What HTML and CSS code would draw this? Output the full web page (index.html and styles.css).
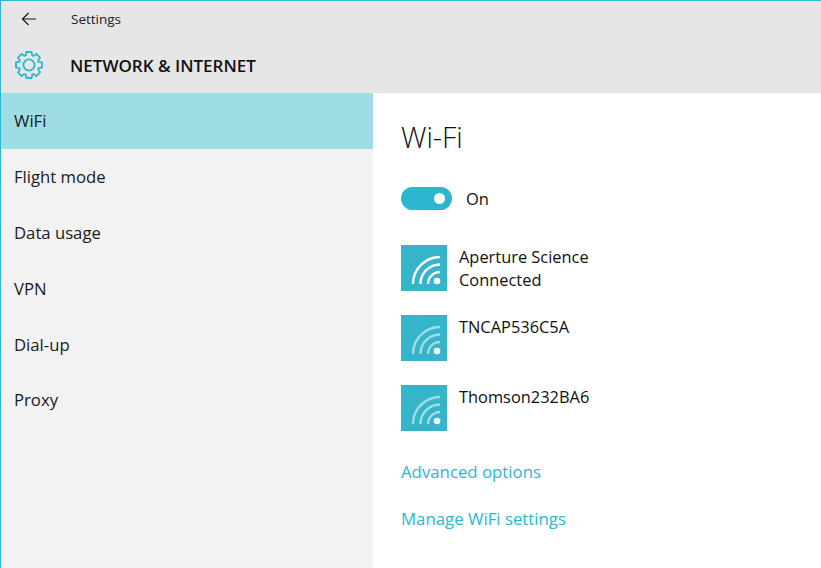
FILE: index.html
```html
<!DOCTYPE html>
<html lang="en">
<head>
<meta charset="utf-8">
<title>Settings</title>
<link rel="stylesheet" href="styles.css">
</head>
<body>
<div class="window">
  <header class="header">
    <div class="titlebar">
      <svg class="back" width="16" height="14" viewBox="0 0 16 14"><path d="M15 7H1.500M7.500 1L1.500 7l6 6" fill="none" stroke="#111" stroke-width="1.100"/></svg>
      <span class="app-title">Settings</span>
    </div>
    <div class="section">
      <svg class="gear" width="30" height="30" viewBox="-15 -15 30 30"><path d="M2.600-13L3.200-9.600 4.530-9.050 7.350-11.030 11.030-7.350 9.050-4.530 9.600-3.200 13-2.600 13 2.600 9.600 3.200 9.050 4.530 11.030 7.350 7.350 11.030 4.530 9.050 3.200 9.600 2.600 13-2.600 13-3.200 9.600-4.530 9.050-7.350 11.030-11.030 7.350-9.050 4.530-9.600 3.200-13 2.600-13-2.600-9.600-3.200-9.050-4.530-11.030-7.350-7.350-11.030-4.530-9.050-3.200-9.600-2.600-13z" fill="none" stroke="#2ab7cf" stroke-width="1.800" stroke-linejoin="round"/><circle r="5.600" fill="none" stroke="#2ab7cf" stroke-width="1.800"/></svg>
      <h1 class="section-title">NETWORK &amp; INTERNET</h1>
    </div>
  </header>
  <div class="body">
    <nav class="sidebar">
      <a class="nav-item active">WiFi</a>
      <a class="nav-item">Flight mode</a>
      <a class="nav-item">Data usage</a>
      <a class="nav-item">VPN</a>
      <a class="nav-item">Dial-up</a>
      <a class="nav-item">Proxy</a>
    </nav>
    <main class="content">
      <h2 class="page-title">Wi-Fi</h2>
      <div class="toggle-row">
        <span class="toggle"><span class="knob"></span></span>
        <span class="toggle-label">On</span>
      </div>
      <ul class="networks">
        <li class="network">
          <svg class="net-icon" width="46" height="46" viewBox="0 0 46 46"><rect width="46" height="46" fill="#36b5ca"/><g fill="none" stroke="#fff" stroke-width="2.400"><path d="M12 39a27 27 0 0 1 27-27"/><path d="M19.500 39a19.500 19.500 0 0 1 19.500-19.500"/><path d="M27 39a12 12 0 0 1 12-12"/></g><circle cx="36" cy="36" r="3.300" fill="#fff"/></svg>
          <div class="net-text"><div>Aperture Science</div><div>Connected</div></div>
        </li>
        <li class="network">
          <svg class="net-icon" width="46" height="46" viewBox="0 0 46 46"><rect width="46" height="46" fill="#36b5ca"/><g fill="none" stroke="#9fdce6" stroke-width="2.400"><path d="M12 39a27 27 0 0 1 27-27"/><path d="M19.500 39a19.500 19.500 0 0 1 19.500-19.500"/><path d="M27 39a12 12 0 0 1 12-12"/></g><circle cx="36" cy="36" r="3.300" fill="#fff"/></svg>
          <div class="net-text"><div>TNCAP536C5A</div></div>
        </li>
        <li class="network">
          <svg class="net-icon" width="46" height="46" viewBox="0 0 46 46"><rect width="46" height="46" fill="#36b5ca"/><g fill="none" stroke="#9fdce6" stroke-width="2.400"><path d="M12 39a27 27 0 0 1 27-27"/><path d="M19.500 39a19.500 19.500 0 0 1 19.500-19.500"/><path d="M27 39a12 12 0 0 1 12-12"/></g><circle cx="36" cy="36" r="3.300" fill="#fff"/></svg>
          <div class="net-text"><div>Thomson232BA6</div></div>
        </li>
      </ul>
      <a class="link first-link">Advanced options</a>
      <a class="link">Manage WiFi settings</a>
    </main>
  </div>
</div>
</body>
</html>
```
FILE: styles.css
```css
* { box-sizing: border-box; }
html, body { margin: 0; padding: 0; }
body { font-family: "Open Sans", "Noto Sans", sans-serif; color: #111; background: #fff; }
.window { width: 821px; height: 568px; border-left: 1px solid #2ab7cf; border-top: 1px solid #2ab7cf; display: flex; flex-direction: column; overflow: hidden; }
.header { background: #e6e6e6; height: 92px; flex: none; display: flex; flex-direction: column; }
.titlebar { height: 36px; display: flex; align-items: center; padding-left: 20px; }
.back { flex: none; }
.app-title { margin-left: 34px; font-size: 13.500px; color: #222; }
.section { display: flex; align-items: center; padding-left: 13px; height: 36px; margin-top: 10px; }
.gear { flex: none; }
.section-title { margin: 0 0 0 26px; font-size: 17px; font-weight: 600; color: #111; }
.body { flex: 1; display: flex; min-height: 0; }
.sidebar { width: 372px; flex: none; background: #f2f2f2; display: flex; flex-direction: column; }
.nav-item { height: 55.800px; display: flex; align-items: center; padding-left: 13px; font-size: 16.700px; color: #1a1a1a; }
.nav-item.active { background: #9fdde6; }
.content { flex: 1; padding: 26px 0 0 28px; display: flex; flex-direction: column; align-items: flex-start; }
.page-title { margin: 0; font-size: 28.500px; font-weight: 300; line-height: 36px; color: #111; }
.toggle-row { display: flex; align-items: center; margin-top: 32px; }
.toggle { width: 51px; height: 23px; border-radius: 12px; background: #2ab7cf; display: flex; align-items: center; justify-content: flex-end; padding-right: 7px; }
.knob { width: 11px; height: 11px; border-radius: 50%; background: #fff; }
.toggle-label { margin-left: 14px; font-size: 16.500px; }
.networks { list-style: none; margin: 35px 0 0; padding: 0; display: flex; flex-direction: column; gap: 24px; }
.network { display: flex; gap: 12px; }
.net-icon { flex: none; display: block; }
.net-text { font-size: 16.400px; line-height: 23px; color: #111; }
.link { font-size: 16.800px; color: #2ab7cf; line-height: 24px; margin-top: 23px; }
.first-link { margin-top: 29px; }
```
